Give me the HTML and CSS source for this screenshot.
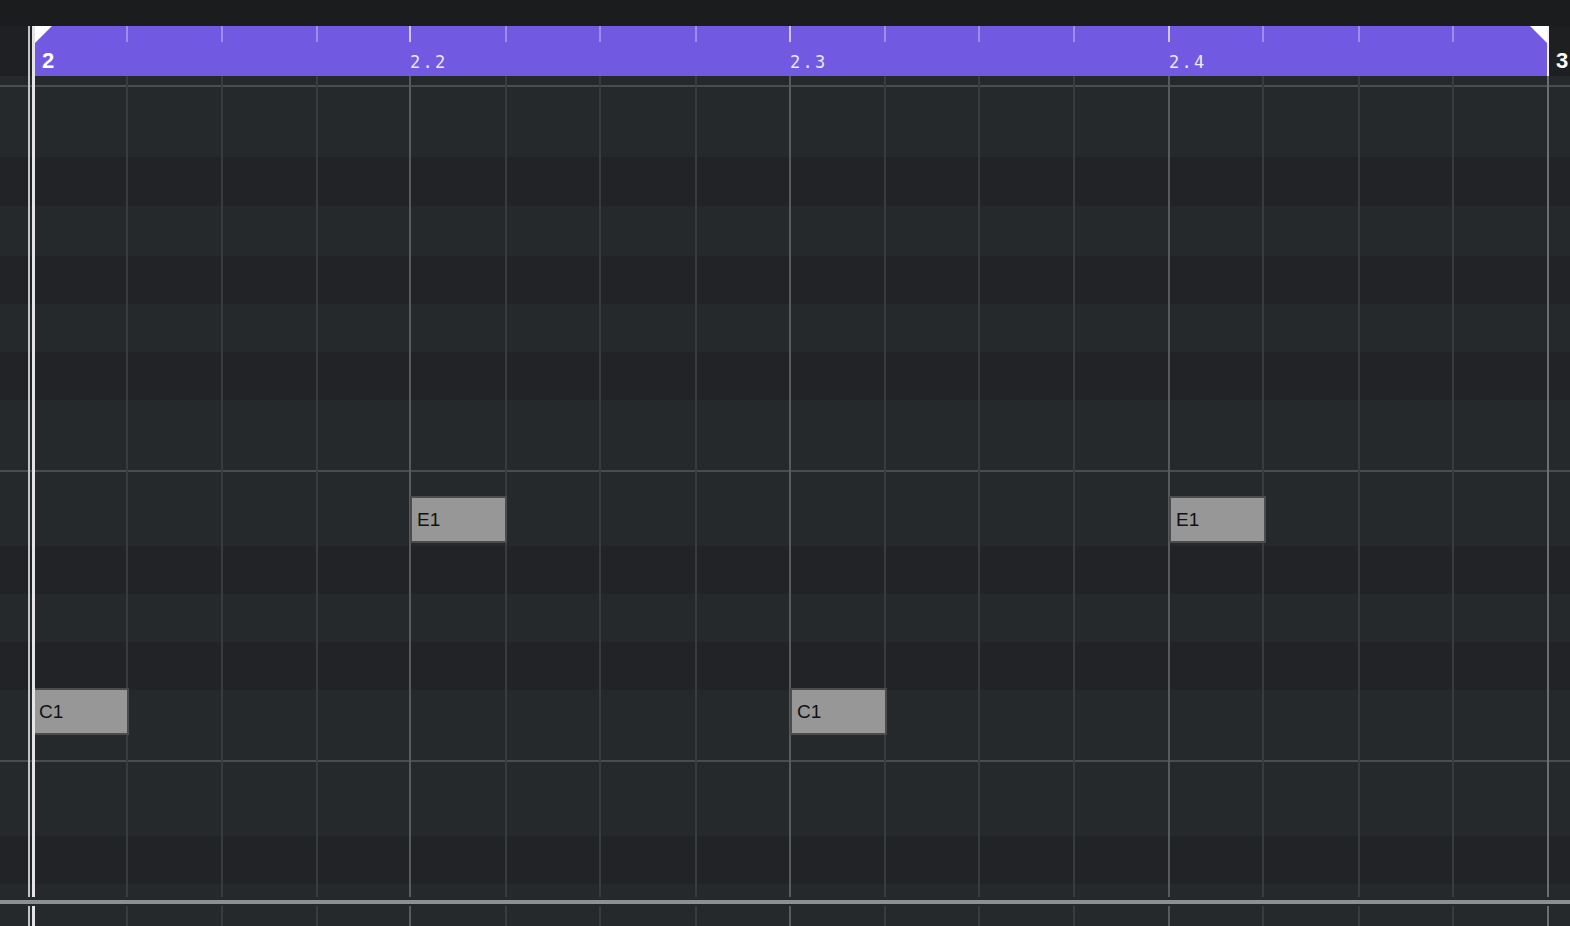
FILE: index.html
```html
<!DOCTYPE html>
<html lang="en">
<head>
  <meta charset="UTF-8" />
  <title>Piano Roll</title>
  <link rel="stylesheet" href="styles.css">
</head>
<body>
  <div class="topbar"></div>

  <div class="editor">
    <div class="ruler">
      <div class="ruler-gutter"></div>
      <div class="region">
        <div class="tick first"><span class="bar-num">2</span></div>
        <div class="tick"></div>
        <div class="tick"></div>
        <div class="tick"></div>
        <div class="tick major"><span class="beat">2.2</span></div>
        <div class="tick"></div>
        <div class="tick"></div>
        <div class="tick"></div>
        <div class="tick major"><span class="beat">2.3</span></div>
        <div class="tick"></div>
        <div class="tick"></div>
        <div class="tick"></div>
        <div class="tick major"><span class="beat">2.4</span></div>
        <div class="tick"></div>
        <div class="tick"></div>
        <div class="tick"></div>
      </div>
      <div class="ruler-end"><span class="bar-num">3</span></div>
    </div>

    <div class="roll">
      <div class="lane s9"></div>
      <div class="hline"></div>
      <div class="lane s70"></div>
      <div class="lane s49 dark"></div>
      <div class="lane s50"></div>
      <div class="lane dark"></div>
      <div class="lane"></div>
      <div class="lane dark"></div>
      <div class="lane s70"></div>
      <div class="hline"></div>
      <div class="lane s74"></div>
      <div class="lane dark"></div>
      <div class="lane"></div>
      <div class="lane dark"></div>
      <div class="lane s70"></div>
      <div class="hline"></div>
      <div class="lane s74"></div>
      <div class="lane dark"></div>
      <div class="lane s13"></div>

      <!-- notes -->
      <div class="note c1 step-1">C1</div>
      <div class="note e1 step-5">E1</div>
      <div class="note c1 step-9">C1</div>
      <div class="note e1 step-13">E1</div>
    </div>

    <div class="divider"><div class="divider-bar"></div></div>
    <div class="tail"></div>

    <div class="cols">
      <div></div>
      <div></div>
      <div class="col"></div>
      <div class="col"></div>
      <div class="col"></div>
      <div class="col major"></div>
      <div class="col"></div>
      <div class="col"></div>
      <div class="col"></div>
      <div class="col major"></div>
      <div class="col"></div>
      <div class="col"></div>
      <div class="col"></div>
      <div class="col major"></div>
      <div class="col"></div>
      <div class="col"></div>
      <div class="col"></div>
      <div class="col end"></div>
    </div>

    <div class="playhead"></div>
  </div>
</body>
</html>
```

FILE: styles.css
```css
* {
  box-sizing: border-box;
}

body {
  margin: 0;
  width: 1570px;
  height: 926px;
  overflow: hidden;
  background: #1b1c1e;
  font-family: 'Liberation Sans', Arial, sans-serif;
}

.topbar {
  height: 26px;
  background: #1b1c1e;
}

.editor {
  position: relative;
  height: 900px;
  background: #25292c;
}

/* ruler */
.ruler {
  display: flex;
  height: 50px;
}

.ruler-gutter {
  width: 35px;
  background: #1f2023;
}

.ruler-end {
  flex: 1;
  background: #1e1f21;
}

.region {
  position: relative;
  flex: none;
  width: 1514px;
  display: grid;
  grid-template-columns: 91px 95px 95px 93px 96px 94px 96px 94px 95px 94px 95px 95px 94px 96px 94px 1fr;
  background: #7159e1;
  border-right: 2px solid #f4f4f4;
}

.region::before {
  content: "";
  position: absolute;
  left: 0;
  top: 0;
  border-top: 17px solid #fff;
  border-right: 17px solid transparent;
}

.region::after {
  content: "";
  position: absolute;
  right: 0;
  top: 0;
  border-top: 17px solid #fff;
  border-left: 17px solid transparent;
}

.tick::before {
  content: "";
  display: block;
  width: 2px;
  height: 16px;
  background: #9c8fea;
}

.tick.major::before {
  background: #cfc7f7;
}

.tick.first::before {
  display: none;
}

.beat {
  display: block;
  margin-top: 10px;
  padding-left: 1px;
  font-family: 'DejaVu Sans Mono', monospace;
  font-size: 17px;
  line-height: 20px;
  letter-spacing: 2.3px;
  color: #ece8fb;
}

.bar-num {
  display: block;
  padding: 25px 0 0 7px;
  font-weight: bold;
  font-size: 22px;
  line-height: 20px;
  color: #fff;
}

/* note lanes */
.roll {
  position: relative;
  height: 821px;
}

.lane {
  height: 48px;
}

.lane.dark {
  background: #212326;
}

.lane.s9 { height: 9px; }
.lane.s13 { height: 13px; }
.lane.s49 { height: 49px; }
.lane.s50 { height: 50px; }
.lane.s70 { height: 70px; }
.lane.s74 { height: 74px; }

.hline {
  height: 2px;
  background: #4a4d50;
}

.note {
  position: absolute;
  z-index: 2;
  display: flex;
  align-items: center;
  width: 97px;
  height: 47px;
  padding-left: 5px;
  background: #979797;
  border: 2px solid #4b4c4e;
  font-size: 19px;
  color: #111;
}

.note.c1 { top: 612px; }
.note.e1 { top: 420px; }

.step-1 { left: 32px; }
.step-5 { left: 410px; }
.step-9 { left: 790px; }
.step-13 { left: 1169px; }

.divider {
  position: relative;
  z-index: 4;
  height: 9px;
  padding-top: 3px;
  background: #25292c;
}

.divider-bar {
  height: 4px;
  background: #8d8f91;
}

.tail {
  height: 20px;
}

/* grid columns */
.cols {
  position: absolute;
  top: 50px;
  left: 0;
  right: 0;
  bottom: 0;
  z-index: 1;
  display: grid;
  grid-template-columns: 31px 95px 95px 95px 93px 96px 94px 96px 94px 95px 94px 95px 95px 94px 96px 94px 95px 1fr;
  pointer-events: none;
}

.col {
  border-left: 2px solid #393c3f;
}

.col.major {
  border-left-color: #585b5e;
}

.col.end {
  border-left-color: #6c6e71;
}

.playhead {
  position: absolute;
  top: 0;
  bottom: 0;
  left: 28px;
  width: 7px;
  z-index: 3;
  border-left: 2px solid #c2c3c5;
  border-right: 3px solid #e4e4e4;
}
```
